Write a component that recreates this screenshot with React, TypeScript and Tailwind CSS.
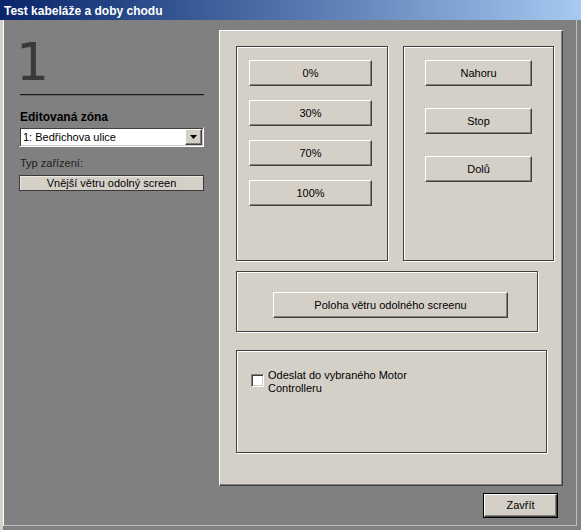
const raised =
  "flex items-center justify-center bg-[#d4d0c8] text-[11px] leading-[13px] text-black border border-t-white border-l-white border-b-[#404040] border-r-[#404040] shadow-[inset_-1px_-1px_0_#808080]";

const group =
  "border border-[#404040] shadow-[1px_1px_0_#ffffff,inset_1px_1px_0_#ffffff]";

function Btn({ label, className }: { label: string; className: string }) {
  return <div className={`${raised} ${className}`}>{label}</div>;
}

export default function App() {
  return (
    <div className="w-[581px] h-[530px] flex flex-col bg-[#808080] overflow-hidden font-['Liberation_Sans',Arial,sans-serif]">
      {/* ── Title bar ── */}
      <div className="h-[20px] shrink-0 bg-linear-to-r from-[#0a246a] to-[#a6caf0] pl-[4px] pt-[3px] text-[12px] leading-[17px] font-bold text-white">
        Test kabeláže a doby chodu
      </div>

      {/* ── Window body ── */}
      <div className="flex-1 flex border-l-[3px] border-l-[#d4d0c8]">
        <div className="flex-1 flex flex-col mr-[4px] mb-[4px] border-l border-l-white border-r border-r-[#bdbdbd] border-b border-b-[#bdbdbd]">
          <div className="flex pt-[10px] pl-[15px]">
            {/* Left column */}
            <div className="w-[185px] flex flex-col">
              <div className="mt-[6px] -ml-[3px] h-[52px] text-[52px] leading-[52px] text-[#3a3a3a] font-['DejaVu_Sans',sans-serif]">
                1
              </div>
              <div className="mt-[6px] ml-[1px] h-[2px] border-t border-t-[#1a1a1a] border-b border-b-[#6a6a6a]" />
              <div className="mt-[14px] ml-[1px] text-[12px] leading-[14px] font-bold text-black">
                Editovaná zóna
              </div>
              <div className="mt-[3px] h-[20px] flex items-center p-[1px] bg-white border border-t-[#808080] border-l-[#808080] border-b-white border-r-white shadow-[inset_1px_1px_0_#404040,inset_-1px_-1px_0_#d4d0c8]">
                <span className="flex-1 pl-[2px] text-[11px] leading-[13px] text-black">1: Bedřichova ulice</span>
                <div className={`${raised} w-[17px] h-[16px]`}>
                  <svg width="7" height="4" viewBox="0 0 7 4">
                    <path d="M0 0h7L3.5 4z" fill="#000" />
                  </svg>
                </div>
              </div>
              <div className="mt-[10px] ml-[1px] text-[11px] leading-[13px] text-[#1e1e1e]">Typ zařízení:</div>
              <div className="mt-[5px] h-[16px] flex items-center justify-center bg-[#d4d0c8] border border-[#3a3a3a] shadow-[inset_1px_1px_0_#ece9e4] text-[11px] leading-[13px] text-black">
                Vnější větru odolný screen
              </div>
            </div>

            {/* Right panel */}
            <div className="ml-[15px] w-[344px] h-[456px] bg-[#d4d0c8] border border-t-white border-l-white border-b-[#404040] border-r-[#404040] shadow-[inset_-1px_-1px_0_#808080] pt-[15px] pl-[16px] flex flex-col">
              <div className="flex gap-[15px]">
                <div className={`${group} w-[152px] h-[215px] pt-[13px] pl-[12px] flex flex-col gap-[14px]`}>
                  {["0%", "30%", "70%", "100%"].map(l => (
                    <Btn key={l} label={l} className="w-[123px] h-[26px]" />
                  ))}
                </div>
                <div className={`${group} w-[151px] h-[215px] pt-[13px] pl-[21px] flex flex-col gap-[22px]`}>
                  {["Nahoru", "Stop", "Dolů"].map(l => (
                    <Btn key={l} label={l} className="w-[107px] h-[26px]" />
                  ))}
                </div>
              </div>

              <div className={`${group} mt-[10px] w-[302px] h-[61px] pt-[20px] pl-[36px]`}>
                <Btn label="Poloha větru odolného screenu" className="w-[235px] h-[26px]" />
              </div>

              <div className={`${group} mt-[18px] w-[311px] h-[103px] pl-[14px] flex items-start`}>
                <div className="mt-[23px] w-[13px] h-[13px] shrink-0 bg-white border border-t-[#808080] border-l-[#808080] border-b-white border-r-white shadow-[inset_1px_1px_0_#404040,inset_-1px_-1px_0_#d4d0c8]" />
                <div className="ml-[4px] pt-[18px] text-[11px] leading-[13px] text-black">
                  Odeslat do vybraného Motor
                  <br />
                  Controlleru
                </div>
              </div>
            </div>
          </div>

          {/* Bottom bar */}
          <div className="flex justify-end pr-[18px] mt-[7px]">
            <div className="w-[75px] h-[25px] border border-black flex">
              <Btn label="Zavřít" className="flex-1" />
            </div>
          </div>
        </div>
      </div>
    </div>
  );
}
